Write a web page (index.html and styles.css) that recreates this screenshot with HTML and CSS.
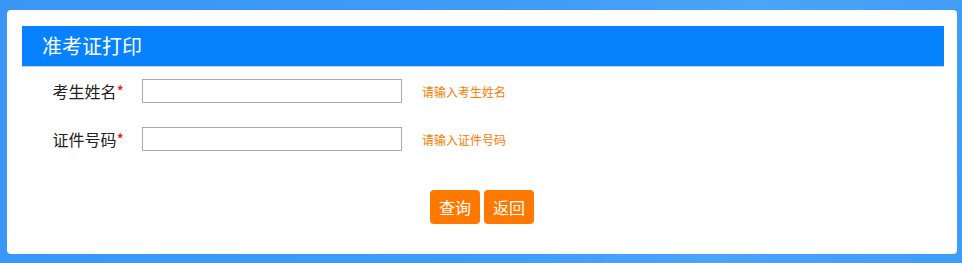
FILE: index.html
```html
<!DOCTYPE html>
<html lang="zh-CN">
<head>
<meta charset="utf-8">
<title>准考证打印</title>
<link rel="stylesheet" href="styles.css">
</head>
<body>
<div class="card">
  <div class="header">准考证打印</div>
  <form class="form">
    <div class="row">
      <label class="label">考生姓名<span class="req">*</span></label>
      <input class="input" type="text">
      <span class="hint">请输入考生姓名</span>
    </div>
    <div class="row">
      <label class="label">证件号码<span class="req">*</span></label>
      <input class="input" type="text">
      <span class="hint">请输入证件号码</span>
    </div>
    <div class="actions">
      <button type="button" class="btn">查询</button>
      <button type="button" class="btn">返回</button>
    </div>
  </form>
</div>
</body>
</html>
```
FILE: styles.css
```css
html, body {
  margin: 0;
  height: 100%;
}
body {
  background: linear-gradient(100deg, #3996f5 0%, #3e9cf7 50%, #4aa4f7 75%, #3f9cf6 100%);
  padding: 10px 5px 0 7px;
  box-sizing: border-box;
  font-family: "Microsoft YaHei", "Noto Sans CJK SC", sans-serif;
  overflow: hidden;
}
.card {
  width: 950px;
  height: 244px;
  box-sizing: border-box;
  background: #fff;
  border-radius: 4px;
  padding: 16px 13px 0 15px;
}
.header {
  height: 40px;
  line-height: 40px;
  background: #0782fe;
  color: #fff;
  font-size: 20px;
  padding-left: 20px;
  border-bottom: 1px solid #c9d1d9;
}
.form {
  margin: 0;
  padding-top: 12px;
}
.row {
  display: flex;
  align-items: center;
  height: 24px;
  margin-bottom: 24px;
}
.label {
  width: 102px;
  text-align: right;
  margin-right: 18px;
  font-size: 16px;
  color: #222;
}
.req {
  color: #f00;
}
.input {
  width: 260px;
  height: 24px;
  box-sizing: border-box;
  border: 1px solid #a9a9a9;
  margin: 0;
  padding: 0 4px;
  font-size: 14px;
}
.hint {
  margin-left: 20px;
  font-size: 12px;
  color: #ff7a00;
}
.actions {
  display: flex;
  justify-content: center;
  gap: 4px;
  padding-top: 15px;
  padding-right: 2px;
}
.btn {
  width: 50px;
  height: 34px;
  border: none;
  border-radius: 4px;
  background: #ff7800;
  color: #fff;
  font-family: inherit;
  font-size: 16px;
  padding: 0;
}
```
